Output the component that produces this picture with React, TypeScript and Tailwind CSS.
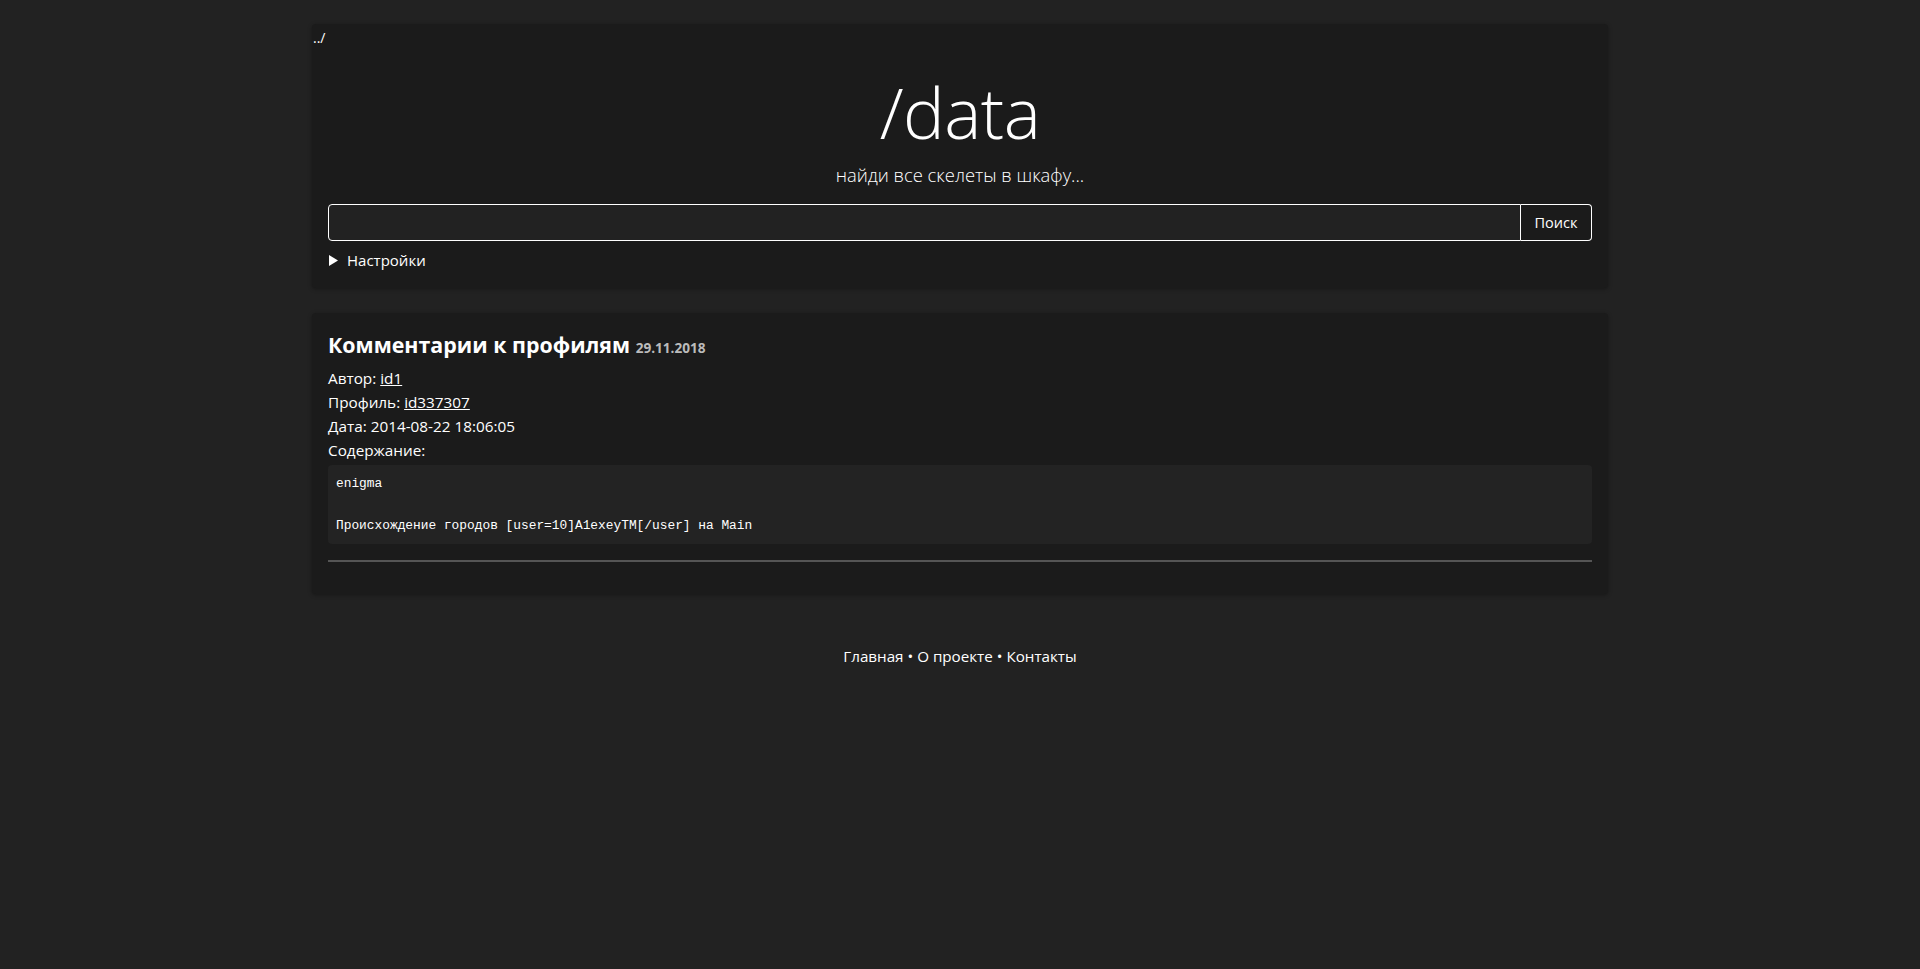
import { useState } from 'react';

const font = { fontFamily: '"Open Sans", "Noto Sans", sans-serif' };

export default function App() {
  const [query, setQuery] = useState('');

  return (
    <div className="min-h-screen bg-[#222222] pt-6 text-white" style={font}>
      {/* Header card */}
      <div className="mx-auto w-[1296px] rounded bg-[#1b1b1b] pb-[17px] shadow-[0_1px_4px_rgba(0,0,0,0.35)]">
        <a href="#" className="block h-[20px] pl-px pt-[6px] text-[14px] leading-[16px] text-white no-underline">
          ../
        </a>
        <h1 className="mt-[25px] text-center text-[70px] font-light leading-[86px] tracking-[-0.5px] text-white">
          /data
        </h1>
        <p className="mt-[6px] text-center text-[18.4px] font-light leading-[28px] text-white">
          найди все скелеты в шкафу...
        </p>
        <form className="mx-4 mt-[15px] flex h-[37px]" onSubmit={(e) => e.preventDefault()}>
          <input
            value={query}
            onChange={(e) => setQuery(e.target.value)}
            className="h-full flex-1 rounded-l border border-white bg-[#222222] px-2 text-[15px] text-white outline-none"
          />
          <button className="h-full w-[71px] rounded-r border border-l-0 border-white bg-[#1b1b1b] text-[14.5px] text-white">
            Поиск
          </button>
        </form>
        <div className="mx-4 mt-[8px] flex items-center gap-[8px] text-[15px] leading-[22px] text-white">
          <svg width="10" height="11" viewBox="0 0 10 11" className="ml-px">
            <path d="M0 0 L9 5.5 L0 11 Z" fill="#ffffff" />
          </svg>
          <span>Настройки</span>
        </div>
      </div>

      {/* Entry card */}
      <div className="mx-auto mt-[25px] w-[1296px] rounded bg-[#1b1b1b] px-4 pb-[32px] pt-4 shadow-[0_1px_4px_rgba(0,0,0,0.35)]">
        <h2 className="text-[21.4px] font-bold leading-[32px] text-white">
          Комментарии к профилям{' '}
          <span className="text-[13.6px] font-bold text-[#bbbbbb]">29.11.2018</span>
        </h2>
        <div className="mt-[2px] text-[15.3px] leading-[24px] text-white">
          <div>
            Автор: <a href="#" className="text-white underline">id1</a>
          </div>
          <div>
            Профиль: <a href="#" className="text-white underline">id337307</a>
          </div>
          <div>Дата: 2014-08-22 18:06:05</div>
          <div>Содержание:</div>
        </div>
        <pre className="mt-[3px] rounded-sm bg-[#232323] px-2 py-2 font-['Liberation_Mono',monospace] text-[12.85px] leading-[21px] text-white">
{`enigma

Происхождение городов [user=10]A1exeyTM[/user] на Main`}
        </pre>
        <div className="mt-4 h-[2px] bg-[#555555]" />
      </div>

      {/* Footer */}
      <div className="mt-[50px] text-center text-[15.2px] leading-[24px] text-white">
        <a href="#" className="text-white">Главная</a> • <a href="#" className="text-white">О проекте</a> •{' '}
        <a href="#" className="text-white">Контакты</a>
      </div>
    </div>
  );
}
